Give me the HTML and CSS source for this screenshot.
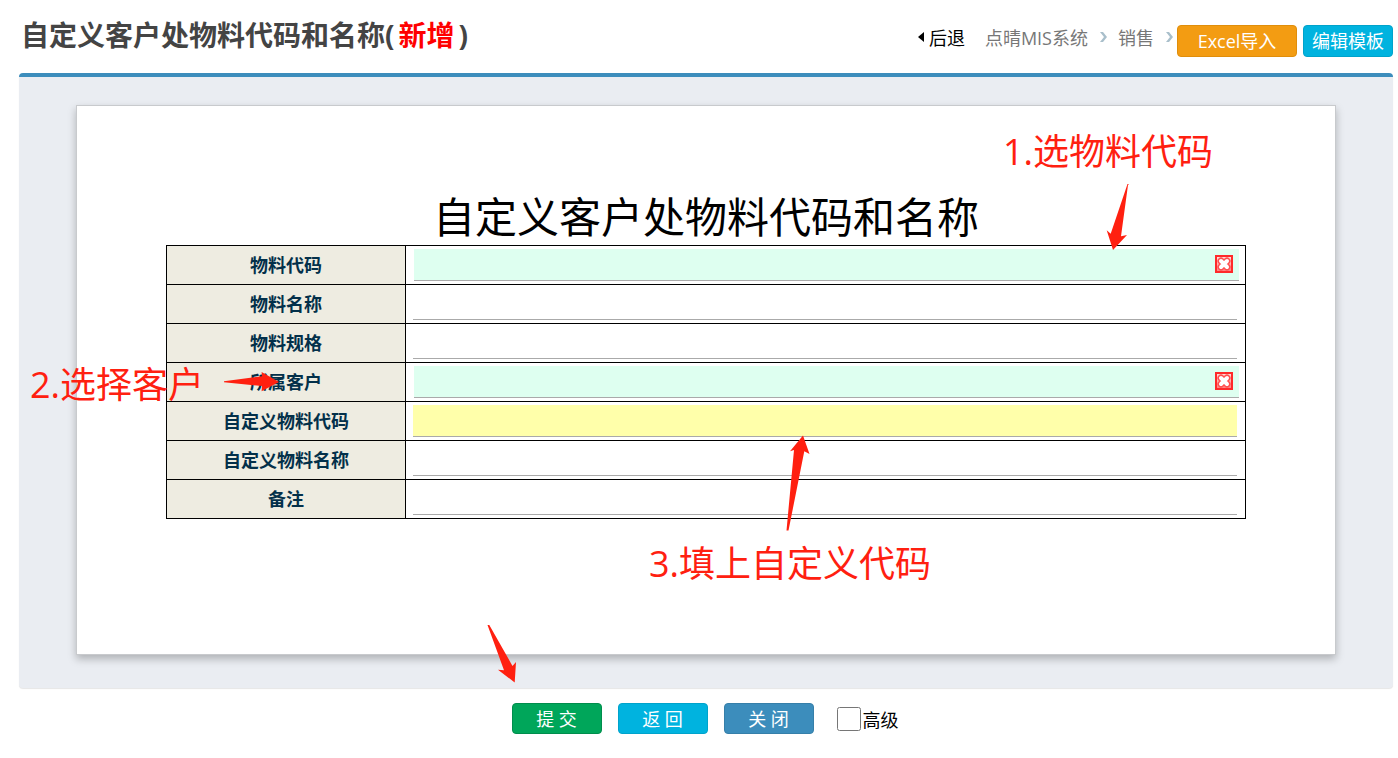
FILE: index.html
```html
<!DOCTYPE html>
<html lang="zh-CN">
<head>
    <meta charset="UTF-8">
    <meta name="viewport" content="width=device-width, initial-scale=1.0">
    <title>自定义客户处物料代码和名称</title>
    <link rel="stylesheet" href="styles.css">
</head>
<body>

<header class="page-header">
    <h1>自定义客户处物料代码和名称(<span class="mode">新增</span>)</h1>
    <div class="header-right">
        <nav class="breadcrumb">
            <a href="#" class="back">
                <svg width="6" height="10" viewBox="0 0 6 10"><path d="M6 0v10L0 5z" fill="#000"/></svg>
                后退
            </a>
            <a href="#">点晴MIS系统</a>
            <svg class="sep" width="7" height="12" viewBox="0 0 7 12"><path d="M0 1h3l4 5-4 5H0l4-5z" fill="#a9bfcb"/></svg>
            <a href="#">销售</a>
            <svg class="sep" width="7" height="12" viewBox="0 0 7 12"><path d="M0 1h3l4 5-4 5H0l4-5z" fill="#a9bfcb"/></svg>
        </nav>
        <button type="button" class="btn btn-import">Excel导入</button>
        <button type="button" class="btn btn-info">编辑模板</button>
    </div>
</header>

<form id="item-form">
    <div class="box">
        <div class="paper">
            <h2>自定义客户处物料代码和名称</h2>
            <table class="form-table">
                <tr>
                    <th><label for="item-code">物料代码</label></th>
                    <td class="picker">
                        <div class="field">
                            <input type="text" id="item-code" name="item-code">
                            <button type="button" class="clear" aria-label="清除物料代码">
                                <svg width="18" height="18" viewBox="0 0 18 18">
                                    <defs>
                                        <linearGradient id="clear-bg" x1="0" y1="0" x2="0" y2="1">
                                            <stop offset="0" stop-color="#ffe4e0"/>
                                            <stop offset="1" stop-color="#ff7c7c"/>
                                        </linearGradient>
                                    </defs>
                                    <rect x="1" y="1" width="16" height="16" fill="url(#clear-bg)" stroke="#ff2a2a" stroke-width="2"/>
                                    <path d="M6 6l6 6M12 6l-6 6" stroke="#ff5050" stroke-width="7" stroke-linecap="round"/>
                                    <path d="M6 6l6 6M12 6l-6 6" stroke="#fff" stroke-width="4" stroke-linecap="round"/>
                                </svg>
                            </button>
                        </div>
                    </td>
                </tr>
                <tr>
                    <th><label for="item-name">物料名称</label></th>
                    <td><input type="text" id="item-name" name="item-name"></td>
                </tr>
                <tr>
                    <th><label for="item-spec">物料规格</label></th>
                    <td><input type="text" id="item-spec" name="item-spec"></td>
                </tr>
                <tr>
                    <th><label for="customer">所属客户</label></th>
                    <td class="picker">
                        <div class="field">
                            <input type="text" id="customer" name="customer">
                            <button type="button" class="clear" aria-label="清除所属客户">
                                <svg width="18" height="18" viewBox="0 0 18 18">
                                    <rect x="1" y="1" width="16" height="16" fill="url(#clear-bg)" stroke="#ff2a2a" stroke-width="2"/>
                                    <path d="M6 6l6 6M12 6l-6 6" stroke="#ff5050" stroke-width="7" stroke-linecap="round"/>
                                    <path d="M6 6l6 6M12 6l-6 6" stroke="#fff" stroke-width="4" stroke-linecap="round"/>
                                </svg>
                            </button>
                        </div>
                    </td>
                </tr>
                <tr>
                    <th><label for="custom-code">自定义物料代码</label></th>
                    <td><input type="text" id="custom-code" name="custom-code" class="required"></td>
                </tr>
                <tr>
                    <th><label for="custom-name">自定义物料名称</label></th>
                    <td><input type="text" id="custom-name" name="custom-name"></td>
                </tr>
                <tr>
                    <th><label for="remark">备注</label></th>
                    <td><input type="text" id="remark" name="remark"></td>
                </tr>
            </table>

            <!-- step notes lying over the form -->
            <p class="note note-1">1.选物料代码</p>
            <p class="note note-2">2.选择客户</p>
            <p class="note note-3">3.填上自定义代码</p>
            <svg class="arrow arrow-1" width="22" height="68" viewBox="0 0 22 68"><path d="M23 0L22 1L15 52.300L21 51L7 66L.7 46.300L4.700 49.700L21.500 0z"/></svg>
            <svg class="arrow arrow-2" width="56" height="20" viewBox="0 0 56 20"><path d="M0 9.300L38 4.300L37.600 0L55 10L37.600 19.300L38 14L0 10.300z"/></svg>
            <svg class="arrow arrow-3" width="22" height="96" viewBox="0 0 22 96"><path d="M-.5 95.500L7 15L3 16.300L16 .5L22.500 19L17.300 16.300L1.500 95.500z"/></svg>
            <svg class="arrow arrow-4" width="28" height="58" viewBox="0 0 28 58"><path d="M-.5 0L1.300 0L24.500 41L28 37L26.700 57.500L10 44.700L16 45.300z"/></svg>
        </div>
    </div>

    <div class="actions">
        <button type="submit" class="btn btn-submit">提 交</button>
        <button type="button" class="btn btn-info">返 回</button>
        <button type="button" class="btn btn-close">关 闭</button>
        <label class="advanced"><input type="checkbox" name="advanced">高级</label>
    </div>
</form>

</body>
</html>
```

FILE: styles.css
```css
* {
    box-sizing: border-box;
}
body {
    font-family: "Open Sans", "Noto Sans CJK SC", sans-serif;
    font-size: 18px;
    margin: 0;
    padding: 0 5px 0 19px;
    background-color: #fff;
    color: #000;
}
a {
    color: #777;
    text-decoration: none;
}
button {
    font-family: inherit;
    cursor: pointer;
}
.page-header {
    display: flex;
    justify-content: space-between;
    align-items: flex-start;
    height: 73px;
}
.page-header h1 {
    margin: 0;
    padding: 15px 0 0 2px;
    font-size: 28px;
    line-height: 40px;
    color: #444;
}
.mode {
    color: #f00;
    padding: 0 4px;
}
.header-right {
    display: flex;
    padding-top: 25px;
}
.breadcrumb {
    display: flex;
    align-items: center;
    height: 24px;
    margin-right: 4px;
}
.breadcrumb .back {
    display: flex;
    align-items: center;
    gap: 5px;
    margin-right: 20px;
    color: #000;
}
.breadcrumb .sep {
    margin-left: 12px;
}
.breadcrumb .sep + a {
    margin-left: 11px;
}
.btn {
    width: 90px;
    height: 32px;
    padding: 0;
    border: 1px solid;
    border-radius: 4px;
    font-size: 18px;
    line-height: 28px;
    color: #fff;
}
.btn-import {
    width: 120px;
    margin-right: 6px;
    background-color: #f39c12;
    border-color: #e08e0b;
}
.btn-info {
    background-color: #00b3df;
    border-color: #00a3cb;
}
.btn-submit {
    background-color: #00a65a;
    border-color: #008d4c;
}
.btn-close {
    background-color: #3c8dbc;
    border-color: #367fa9;
}
.box {
    padding: 28px 57px 33px;
    background-color: #eaedf2;
    border-top: 4px solid #3c8dbc;
    border-radius: 4px;
    box-shadow: 0 1px 1px rgba(0, 0, 0, 0.1);
}
.paper {
    position: relative;
    max-width: 1260px;
    margin: 0 auto;
    padding: 83px 89px 135px;
    background-color: #fff;
    border: 1px solid #c8cacd;
    box-shadow: 0 4px 8px rgba(0, 0, 0, 0.25);
}
.paper h2 {
    margin: 0;
    font-size: 42px;
    font-weight: normal;
    line-height: 56px;
    text-align: center;
}
.form-table {
    width: 100%;
    border-collapse: collapse;
    table-layout: fixed;
}
.form-table th, .form-table td {
    height: 39px;
    border: 1px solid #000;
}
.form-table th {
    width: 239px;
    padding: 0;
    background-color: #eeece1;
    color: #03304a;
    line-height: 26px;
}
.form-table td {
    padding: 3px 8px 3px 7px;
}
.form-table td.picker {
    padding: 3px 6px 3px 8px;
}
.form-table input {
    display: block;
    width: 100%;
    height: 32px;
    padding: 0 4px;
    border: none;
    border-bottom: 1px solid #aaa;
    background-color: #fff;
    font-family: inherit;
    font-size: 18px;
}
.form-table .picker input {
    background-color: #defff0;
}
.form-table .required {
    background-color: #ffffaa;
}
.field {
    position: relative;
}
.clear {
    position: absolute;
    top: 6px;
    right: 6px;
    padding: 0;
    border: none;
    background: none;
}
.clear svg {
    display: block;
}
.note {
    position: absolute;
    margin: 0;
    font-size: 36px;
    line-height: 48px;
    color: #ff2010;
    white-space: nowrap;
}
.note-1 {
    left: 926px;
    top: 22px;
}
.note-2 {
    left: -47px;
    top: 255px;
}
.note-3 {
    left: 572px;
    top: 434px;
}
.arrow {
    position: absolute;
    fill: #ff2010;
    overflow: visible;
    pointer-events: none;
}
.arrow-1 {
    left: 1029px;
    top: 78px;
}
.arrow-2 {
    left: 147px;
    top: 266px;
}
.arrow-3 {
    left: 710px;
    top: 329px;
}
.arrow-4 {
    left: 411px;
    top: 519px;
}
.actions {
    display: flex;
    justify-content: center;
    align-items: center;
    gap: 16px;
    padding: 15px 2px 15px 0;
}
.actions .btn {
    height: 31px;
}
.advanced {
    display: flex;
    align-items: center;
    gap: 2px;
    margin-left: 7px;
}
.advanced input {
    width: 24px;
    height: 24px;
    margin: 0;
}
```
